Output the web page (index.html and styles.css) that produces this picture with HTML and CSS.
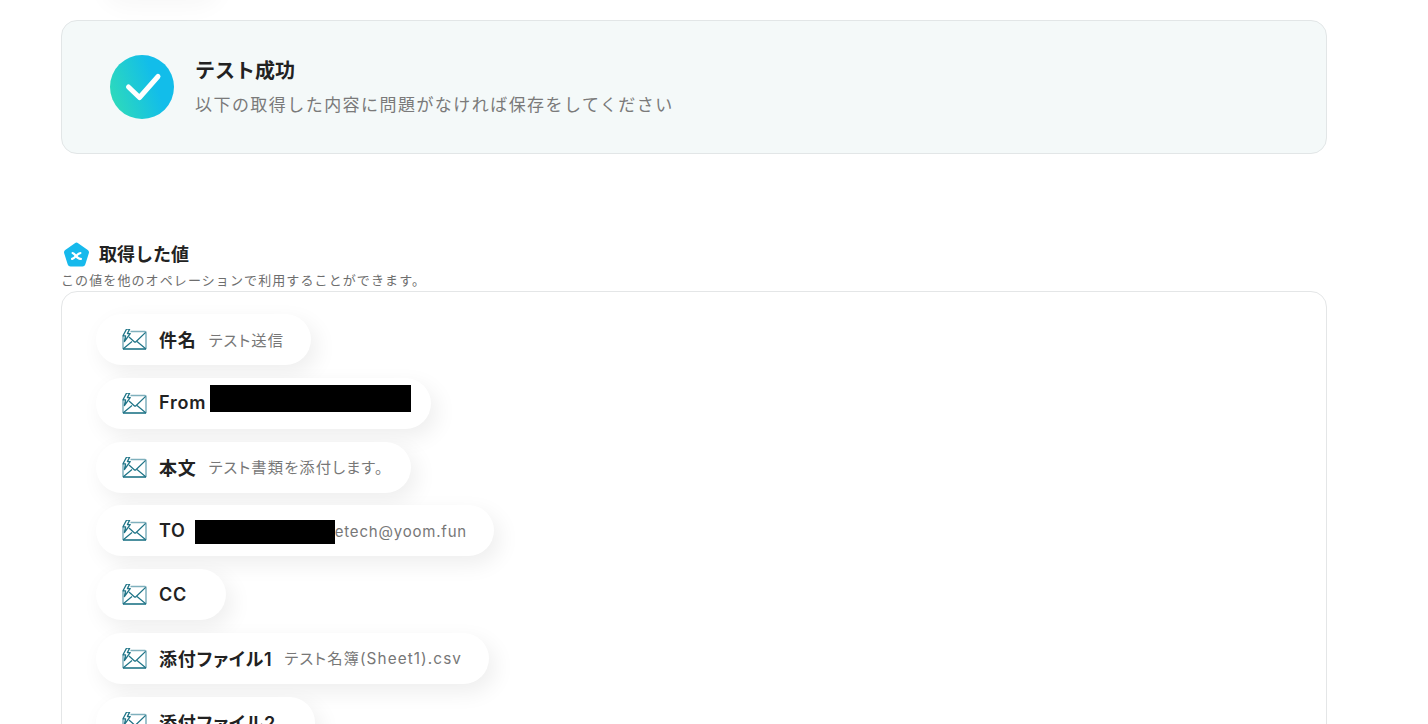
FILE: index.html
```html
<!DOCTYPE html>
<html lang="ja">
<head>
    <meta charset="utf-8">
    <title>テスト成功</title>
    <link rel="stylesheet" href="styles.css">
</head>
<body>
    <svg class="sprite" width="0" height="0">
        <symbol id="mail" viewBox="0 0 25 21">
            <path d="M8.500 2.500H23a1 1 0 0 1 1 1V19a1 1 0 0 1-1 1H2a1 1 0 0 1-1-1V7" fill="none" stroke="#7fb0bd" stroke-width="1.500"/>
            <path d="M1 20l9-7.500M24 20l-9-7.500" fill="none" stroke="#1f7487" stroke-width="1.200"/>
            <path d="M7 8l5.500 4.900q.6.4 1.200 0L23.600 3.400" fill="none" stroke="#1f7487" stroke-width="1.300"/>
            <path d="M1 20H24" fill="none" stroke="#1f7487" stroke-width="1.300"/>
            <path d="M4.500.2L1 6.800H3.600L2.400 12.500L8.200 4.600H5.400L7.600.2Z" fill="#fff" stroke="#1f7487" stroke-width="1.300" stroke-linejoin="round"/>
        </symbol>
    </svg>

    <div class="prev-pill"></div>

    <div class="page">
        <section class="result">
            <svg class="result-icon" viewBox="0 0 64 64">
                <defs>
                    <linearGradient id="okGrad" x1="0" y1="0.8" x2="1" y2="0.45">
                        <stop offset="0" stop-color="#2fdcb8"/>
                        <stop offset="0.75" stop-color="#12bdea"/>
                    </linearGradient>
                </defs>
                <circle cx="32" cy="32" r="32" fill="url(#okGrad)"/>
                <path d="M18.500 32L29.500 42.500L48 21.500" fill="none" stroke="#fff" stroke-width="5" stroke-linecap="round" stroke-linejoin="round"/>
            </svg>
            <div class="result-text">
                <h2>テスト成功</h2>
                <p>以下の取得した内容に問題がなければ保存をしてください</p>
            </div>
        </section>

        <div class="values-head">
            <svg class="values-icon" viewBox="0 0 28 27">
                <path d="M12.300 1.200a3 3 0 0 1 3.400 0l10 7.200a3 3 0 0 1 1.100 3.300l-3.700 11.700a3 3 0 0 1-2.900 2.100H7.800a3 3 0 0 1-2.900-2.100L1.200 11.700a3 3 0 0 1 1.100-3.300Z" fill="#16b9ec"/>
                <path d="M10 11.500c2.500 0 4.500 7 8.500 6M18 11.500c-3 0-5 5-8.500 6" fill="none" stroke="#fff" stroke-width="2.400" stroke-linecap="round"/>
            </svg>
            <h3>取得した値</h3>
        </div>
        <p class="values-note">この値を他のオペレーションで利用することができます。</p>

        <section class="values">
            <div class="pill">
                <svg class="mail"><use href="#mail"/></svg>
                <b>件名</b>
                <span class="val">テスト送信</span>
            </div>
            <div class="pill">
                <svg class="mail"><use href="#mail"/></svg>
                <b>From</b>
                <i class="redact redact-from"></i>
            </div>
            <div class="pill">
                <svg class="mail"><use href="#mail"/></svg>
                <b>本文</b>
                <span class="val">テスト書類を添付します。</span>
            </div>
            <div class="pill">
                <svg class="mail"><use href="#mail"/></svg>
                <b>TO</b>
                <i class="redact redact-to"></i>
                <span class="val val-latin">etech@yoom.fun</span>
            </div>
            <div class="pill">
                <svg class="mail"><use href="#mail"/></svg>
                <b>CC</b>
                <span class="val"></span>
            </div>
            <div class="pill">
                <svg class="mail"><use href="#mail"/></svg>
                <b>添付ファイル1</b>
                <span class="val">テスト名簿(Sheet1).csv</span>
            </div>
            <div class="pill">
                <svg class="mail"><use href="#mail"/></svg>
                <b>添付ファイル2</b>
                <span class="val"></span>
            </div>
        </section>
    </div>
</body>
</html>
```

FILE: styles.css
```css
html, body {
    margin: 0;
    height: 724px;
    overflow: hidden;
    background-color: #fff;
}

body {
    position: relative;
    font-family: Inter, "Noto Sans CJK JP", sans-serif;
    color: #222;
}

.sprite {
    display: block;
}

/* the row above the fold, only its shadow shows */
.prev-pill {
    position: absolute;
    top: -51px;
    left: 96px;
    width: 120px;
    height: 51px;
    border-radius: 26px;
    box-shadow: 6px 8px 22px rgba(0, 0, 0, 0.03);
}

.page {
    width: 1266px;
    margin-left: 61px;
    padding-top: 20px;
}

.result {
    display: flex;
    align-items: center;
    height: 132px;
    padding-left: 48px;
    background-color: #f4f9f9;
    border: solid 1px #e2e6e7;
    border-radius: 16px;
}

.result-icon {
    width: 64px;
    height: 64px;
    margin-right: 21px;
}

.result-text h2 {
    margin: 0;
    font-size: 20px;
    line-height: 28px;
    font-weight: 700;
    color: #222;
}

.result-text p {
    margin: 7px 0 0;
    font-size: 17px;
    line-height: 26px;
    letter-spacing: 1.45px;
    color: #7a7a7a;
}

.values-head {
    display: flex;
    align-items: center;
    margin-top: 88px;
    padding-left: 2px;
    height: 26px;
}

.values-icon {
    width: 27px;
    height: 26px;
    margin-right: 9px;
}

.values-head h3 {
    margin: 0;
    font-size: 18px;
    line-height: 24px;
    font-weight: 700;
    color: #222;
}

.values-note {
    margin: 2px 0 1px;
    font-size: 13px;
    line-height: 20px;
    letter-spacing: 1.1px;
    color: #6e6e6e;
}

.values {
    display: flex;
    flex-direction: column;
    align-items: flex-start;
    gap: 12.8px;
    height: 600px;
    padding: 22px 34px 0;
    border: solid 1px #e4e6e7;
    border-radius: 16px;
}

.pill {
    display: flex;
    align-items: center;
    height: 51px;
    padding: 0 27px 0 26px;
    background-color: #fff;
    border-radius: 26px;
    box-shadow: 6px 8px 22px rgba(0, 0, 0, 0.07);
}

.mail {
    width: 25px;
    height: 21px;
    margin-right: 12px;
}

.pill b {
    margin-bottom: 1px;
    font-size: 18px;
    font-weight: 600;
    letter-spacing: 0.8px;
    font-feature-settings: "palt";
    color: #222;
}

.val {
    margin: 0 0 2px 12px;
    font-size: 15.3px;
    letter-spacing: 1.1px;
    font-feature-settings: "palt";
    color: #777;
}

.val-latin {
    margin: 1px 0 0;
    font-size: 15px;
    letter-spacing: 0.8px;
}

.redact {
    display: block;
    background-color: #000;
}

.redact-from {
    width: 201px;
    height: 27px;
    margin: 0 -7px 9px 4px;
}

.redact-to {
    width: 140px;
    height: 24px;
    margin: 3px 0 0 9px;
}
```
